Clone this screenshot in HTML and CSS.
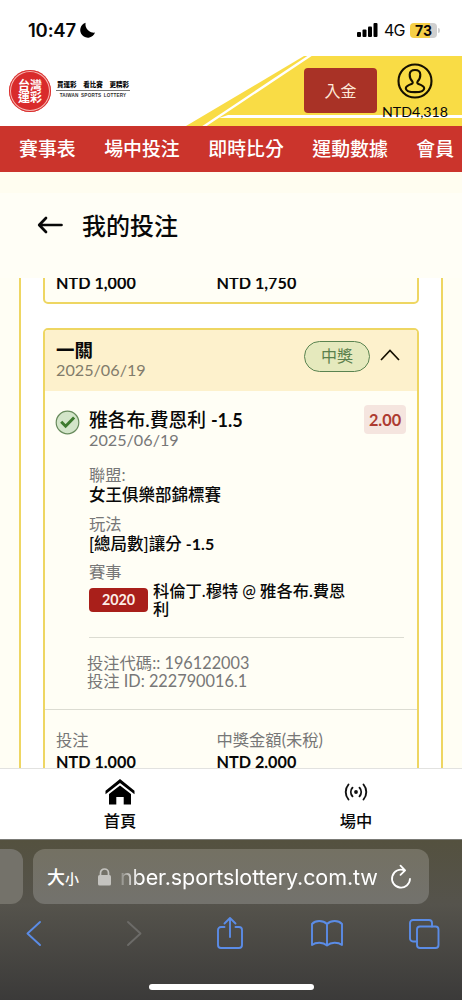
FILE: index.html
```html
<!DOCTYPE html>
<html lang="zh-Hant">
<head>
<meta charset="utf-8">
<meta name="viewport" content="width=device-width">
<title>我的投注</title>
<link rel="stylesheet" href="styles.css">
</head>
<body>
<div class="screen">
  <div class="status">
    <span class="time">10:47</span>
    <svg class="moon" width="16" height="16" viewBox="0 0 16 16"><path d="M5.600.8A7.600 7.600 0 1 0 15 10.600 8.400 8.400 0 0 1 5.600.8Z"/></svg>
    <svg class="signal" width="21" height="14" viewBox="0 0 21 14"><rect x="0" y="9" width="4" height="5" rx="1"/><rect x="5.500" y="6.500" width="4" height="7.500" rx="1"/><rect x="11" y="3.500" width="4" height="10.500" rx="1"/><rect x="16.500" y="0" width="4" height="14" rx="1"/></svg>
    <span class="net">4G</span>
    <span class="battery">73</span><i class="battery-tip"></i>
  </div>

  <header class="header">
    <svg class="stripes" width="462" height="70" viewBox="0 0 462 70"><path fill="#f9dc45" d="M186 70 304 0H462V70Z"/><path fill="none" stroke="#fff" stroke-width="2.400" d="M203 71 311-1"/><path fill="#fff" d="M219 62 228 59H462V62H219Z"/></svg>
    <div class="seal"><span>台灣<br>運彩</span></div>
    <div class="slogan"><div class="slogan-zh"><span>買運彩</span><span>看比賽</span><span>更精彩</span></div><div class="slogan-en">TAIWAN SPORTS LOTTERY</div></div>
    <div class="deposit">入金</div>
    <div class="account">
      <svg width="36" height="36" viewBox="0 0 36 36" fill="none" stroke="#151000" stroke-width="2.100"><circle cx="18" cy="18" r="16.500"/><path d="M15.400 18.500C13.500 16.500 12.600 14 12.700 11.500 12.800 8.700 15 7 18 7s5.200 1.700 5.300 4.500c.1 2.500-.8 5-2.700 7-.7 1-.3 2 .8 2.400 3 1 5.800 1.900 5.800 4.300 0 2.700-4.500 3.900-9.200 3.900s-9.200-1.200-9.200-3.900c0-2.400 2.800-3.300 5.800-4.300 1.100-.4 1.500-1.400.8-2.400Z"/></svg>
      <span>NTD4,318</span>
    </div>
  </header>

  <nav class="nav"><span>賽事表</span><span>場中投注</span><span>即時比分</span><span>運動數據</span><span>會員</span></nav>

  <div class="page-title">
    <svg width="26" height="20" viewBox="0 0 26 20" fill="none" stroke="#080808" stroke-width="2.700" stroke-linecap="round" stroke-linejoin="round"><path d="M24.500 10H3M9 3 2.200 10 9 17"/></svg>
    <h1>我的投注</h1>
  </div>

  <main class="viewport">
    <div class="panel">
      <section class="card previous">
        <div class="amount">NTD 1,000</div><div class="amount">NTD 1,750</div>
      </section>
      <section class="card">
        <div class="card-head">
          <div class="card-name"><strong>一關</strong><span class="muted">2025/06/19</span></div>
          <span class="won">中獎</span>
          <svg class="chevron" width="20" height="12" viewBox="0 0 20 12" fill="none" stroke="#151000" stroke-width="1.700"><path d="m1 11 9-9.500L19 11"/></svg>
        </div>
        <div class="bet">
          <svg class="check" width="25" height="25" viewBox="0 0 25 25" fill="none"><circle cx="12.500" cy="12.500" r="11.300" fill="#d3e5c9" stroke="#688b5d" stroke-width="1.200"/><path stroke="#3d7a2e" stroke-width="3" d="m6.200 11.800 4.400 4.400 8.500-8.700"/></svg>
          <div class="details">
            <div class="pick">雅各布.費恩利 <b>-1.5</b></div>
            <div class="muted date">2025/06/19</div>
            <dl>
              <dt>聯盟:</dt><dd>女王俱樂部錦標賽</dd>
              <dt>玩法</dt><dd>[總局數]讓分 <b>-1.5</b></dd>
              <dt>賽事</dt>
            </dl>
            <div class="match"><span class="code">2020</span><div class="teams">科倫丁.穆特 @ 雅各布.費恩<br>利</div></div>
          </div>
          <span class="odds">2.00</span>
        </div>
        <div class="ids muted"><div>投注代碼:: 196122003</div><div>投注 ID: 222790016.1</div></div>
        <div class="totals">
          <div><div class="muted">投注</div><div class="amount">NTD 1,000</div></div>
          <div><div class="muted">中獎金額(未稅)</div><div class="amount">NTD 2,000</div></div>
        </div>
      </section>
    </div>
  </main>

  <nav class="tabs">
    <div class="tab"><svg width="30" height="28" viewBox="0 0 30 28"><path d="M15 1 .500 12.700v3.600L15 5l14.500 11.300v-3.600Z"/><path d="M15 7.500 4 16v10.500h7.300V19h7.400v7.500H26V16Z"/></svg><span>首頁</span></div>
    <div class="tab"><svg width="30" height="28" viewBox="0 0 30 28" fill="none" stroke="#111" stroke-width="1.900" stroke-linecap="round"><circle cx="15" cy="14" r="1.900" fill="#111" stroke="none"/><path d="M11.500 9.700a6.500 6.500 0 0 0 0 8.600M18.500 9.700a6.500 6.500 0 0 1 0 8.600M7.500 6.500a11.500 11.500 0 0 0 0 15M22.500 6.500a11.500 11.500 0 0 1 0 15"/></svg><span>場中</span></div>
  </nav>

  <footer class="browser">
    <div class="address-row">
      <div class="prev-tab"></div>
      <div class="address">
        <span class="text-size">大<small>小</small></span>
        <svg class="lock" width="13" height="18" viewBox="0 0 13 18"><rect y="7" width="13" height="10.500" rx="1.600" fill="#c4c3bf"/><path fill="none" stroke="#c4c3bf" stroke-width="1.700" d="M2.500 8V5a4 4 0 0 1 8 0v3"/></svg>
        <span class="url">nber.sportslottery.com.tw</span>
        <svg class="reload" width="22" height="26" viewBox="0 0 22 26" fill="none" stroke="#fff" stroke-width="1.800" stroke-linecap="round" stroke-linejoin="round"><path d="M14.500 6.300A9 9 0 1 0 20 14.800M10.500 1.700l4.600 4.600-4.600 4.600"/></svg>
      </div>
    </div>
    <div class="toolbar">
      <svg width="28" height="34" viewBox="0 0 28 34"><path d="M20 6 7.500 17.500 20 29"/></svg>
      <svg class="off" width="28" height="34" viewBox="0 0 28 34"><path d="m8 6 12.500 11.500L8 29"/></svg>
      <svg width="28" height="34" viewBox="0 0 28 34"><path d="M8.500 11H5a3 3 0 0 0-3 3v15a3 3 0 0 0 3 3h18a3 3 0 0 0 3-3V14a3 3 0 0 0-3-3h-3.500M14 21V2M8.500 7.500 14 2l5.500 5.500"/></svg>
      <svg width="34" height="34" viewBox="0 0 34 34"><path d="M17 8C13 4 5.500 4 2 8v21c4-3 11-3 15 .500 4-3.500 11-3.500 15-.500V8C28.500 4 21 4 17 8Zm0 0v21.500"/></svg>
      <svg width="32" height="34" viewBox="0 0 32 34"><path d="M9 25.500H5a3 3 0 0 1-3-3V7a3 3 0 0 1 3-3h16a3 3 0 0 1 3 3v3.500"/><rect x="9" y="10.500" width="21.500" height="21.500" rx="3"/></svg>
    </div>
    <div class="home-bar"></div>
  </footer>
</div>
</body>
</html>
```
FILE: styles.css
```css
* { box-sizing: border-box; }
body { margin: 0; background: #fff; }
svg { display: block; flex: none; }
.screen { width: 462px; height: 1000px; overflow: hidden; display: flex; flex-direction: column; font-family: Lato, "Noto Sans CJK TC", sans-serif; color: #080808; white-space: nowrap; }
.screen > * { flex: none; }

.status { height: 56px; padding: 4px 22px 0 28px; display: flex; align-items: center; font-family: Inter, sans-serif; }
.time { width: 48px; font-size: 18.500px; font-weight: 600; letter-spacing: -.2px; }
.moon { margin-left: 4px; }
.signal { margin-left: auto; }
.net { margin-left: 6px; width: 21px; font-size: 16px; letter-spacing: -.8px; }
.battery { margin-left: 5px; width: 27px; height: 15px; border-radius: 4px; background: linear-gradient(90deg, #f5cf46 75%, #cfcfcf 75%); font-size: 14px; font-weight: 700; line-height: 15px; text-align: center; }
.battery-tip { width: 2px; height: 5px; margin-left: 1px; border-radius: 0 2px 2px 0; background: #cfcfcf; }

.header { position: relative; height: 70px; display: flex; }
.stripes { position: absolute; inset: 0; z-index: -1; }
.seal { width: 42px; height: 42px; margin: 14px 0 0 9px; border-radius: 50%; background: #d92b2b; box-shadow: inset 0 0 0 1px #d92b2b, inset 0 0 0 2px #f6b6b0; color: #fff; font: 700 12px/12.500px "Noto Sans CJK TC", sans-serif; display: flex; align-items: center; justify-content: center; }
.slogan { width: 74px; margin: 22px 0 0 5px; text-align: center; }
.slogan-zh { height: 13px; border-bottom: 1px solid #777; display: flex; justify-content: space-between; padding: 0 1px; font: 900 6.500px/13px "Noto Sans CJK TC", sans-serif; }
.slogan-en { font: 700 4.600px/9px "Liberation Sans", sans-serif; letter-spacing: .2px; word-spacing: 1px; color: #333; }
.deposit { margin: 12px 0 0 174px; width: 73px; height: 45px; border-radius: 4px; background: #a93226; color: #fde9d9; font-size: 16px; line-height: 45px; text-align: center; }
.account { width: 76px; padding-top: 7px; display: flex; flex-direction: column; align-items: center; font-size: 14.200px; line-height: 26px; }

.nav { height: 46px; padding-left: 19px; display: flex; gap: 28.500px; background: #cb342c; color: #fff; font: 500 18.900px/43px "Noto Sans CJK TC", sans-serif; overflow: hidden; }
.nav span { flex: none; }

.page-title { height: 106px; padding: 0 37px; display: flex; align-items: center; gap: 19px; background: linear-gradient(#fffdf0 21px, #fffef6 21px); }
.page-title h1 { margin: -1px 0 0; font: 500 24px/30px "Noto Sans CJK TC", sans-serif; }

.viewport { height: 490px; padding: 0 19px; overflow: hidden; background: #fffef4; }
.panel { height: 560px; padding: 0 22px; border: solid #eed662; border-width: 0 2px; background: #fff; }
.card { border: 2px solid #eed662; border-radius: 5px; background: #fffef5; overflow: hidden; margin-bottom: 24px; }
.card.previous { height: 46px; margin-top: -20px; padding: 13px 11px 0; display: flex; }
.previous .amount, .totals > div { width: 160.500px; }
.amount { font-size: 16.200px; line-height: 20px; font-weight: 700; }
.muted { color: #777; font-size: 16.300px; line-height: 20px; }

.card-head { height: 61px; padding: 0 17px 1px 11px; display: flex; align-items: center; background: #fdf1cc; }
.card-name { flex: 1; }
.card-name strong { display: block; font-size: 18.500px; font-weight: 600; line-height: 20px; }
.card-name .muted { display: block; font-size: 16.200px; color: #827c6b; }
.won { width: 66px; height: 31px; margin: -8px 10px 0 0; border: 1px solid #5a8350; border-radius: 16px; background: #e5e9bd; color: #5b804c; font-size: 16px; line-height: 28px; text-align: center; }
.chevron { margin-top: -11px; }

.bet { padding: 14px 11px 0 10px; display: flex; align-items: flex-start; }
.check { margin: 5px 9px 0 0; }
.details { flex: 1; min-width: 0; }
.pick { font-size: 18.800px; line-height: 30px; font-weight: 500; height: 25px; }
.pick b { font-size: 18px; }
.date { height: 20px; font-size: 16.200px; }
dl { margin: 15px 0 0; font-size: 16.500px; line-height: 20px; }
dt { color: #777; font-size: 16.300px; }
dd { margin: 0 0 8.500px; font-weight: 500; }
dd b { font-size: 16px; }
.match { display: flex; align-items: center; gap: 5px; }
.code { width: 59px; height: 24px; border-radius: 4px; background: #a91f1a; color: #fdeee8; font-size: 14.300px; font-weight: 700; line-height: 24px; text-align: center; }
.teams { font-size: 16.300px; line-height: 18px; font-weight: 500; }
.odds { width: 42px; height: 29px; border-radius: 4px; background: #f5e5df; color: #ad3b31; font-size: 16.300px; line-height: 30px; font-weight: 700; text-align: center; }

.ids { margin: 19px 13px 0 44px; height: 72px; padding: 16px 0 0; border-top: 1px solid #dcdcd2; }
.ids div { margin-left: -2px; line-height: 18px; }
.totals { border-top: 1px solid #dcdcd2; padding: 20px 11px; display: flex; }
.totals .amount { margin-top: 2px; }

.tabs { height: 71px; padding: 9px 0 0 2px; display: flex; border-top: 1px solid #e2e2e0; background: #fff; }
.tab { width: 236px; flex: none; display: flex; flex-direction: column; align-items: center; font: 500 16.300px/28px "Noto Sans CJK TC", sans-serif; }

.browser { height: 161px; padding-top: 9px; background: linear-gradient(#54513f, #55534c 40%, #3b3a39); border-top: 1px solid #7b7b76; }
.address-row { display: flex; gap: 10px; }
.prev-tab { width: 23px; height: 55px; border-radius: 0 12px 12px 0; background: #74726a; }
.address { width: 396px; height: 55px; padding: 0 16px 0 14px; border-radius: 12px; background: linear-gradient(#747163, #73726d); display: flex; align-items: center; color: #fff; }
.text-size { width: 34px; font: 500 18px/54px "Noto Sans CJK TC", sans-serif; }
.text-size small { font-size: 14px; }
.lock { margin: 0 9px 0 17px; }
.url { width: 260px; margin-right: 10px; font: 400 21.500px/54px Inter, sans-serif; letter-spacing: -.1px; -webkit-mask-image: linear-gradient(90deg, rgba(0,0,0,.2), #000 20px); mask-image: linear-gradient(90deg, rgba(0,0,0,.2), #000 20px); }
.toolbar { height: 57px; padding: 0 20px; display: grid; grid-template-columns: 100px 96px 94px 98px 32px; align-items: center; }
.toolbar svg { fill: none; stroke: #5b8ce6; stroke-width: 1.900; stroke-linecap: round; stroke-linejoin: round; }
.toolbar .off { stroke: #6c6b68; }
.home-bar { width: 165px; height: 6px; margin: 23px auto 0; border-radius: 3px; background: #fff; }
```
